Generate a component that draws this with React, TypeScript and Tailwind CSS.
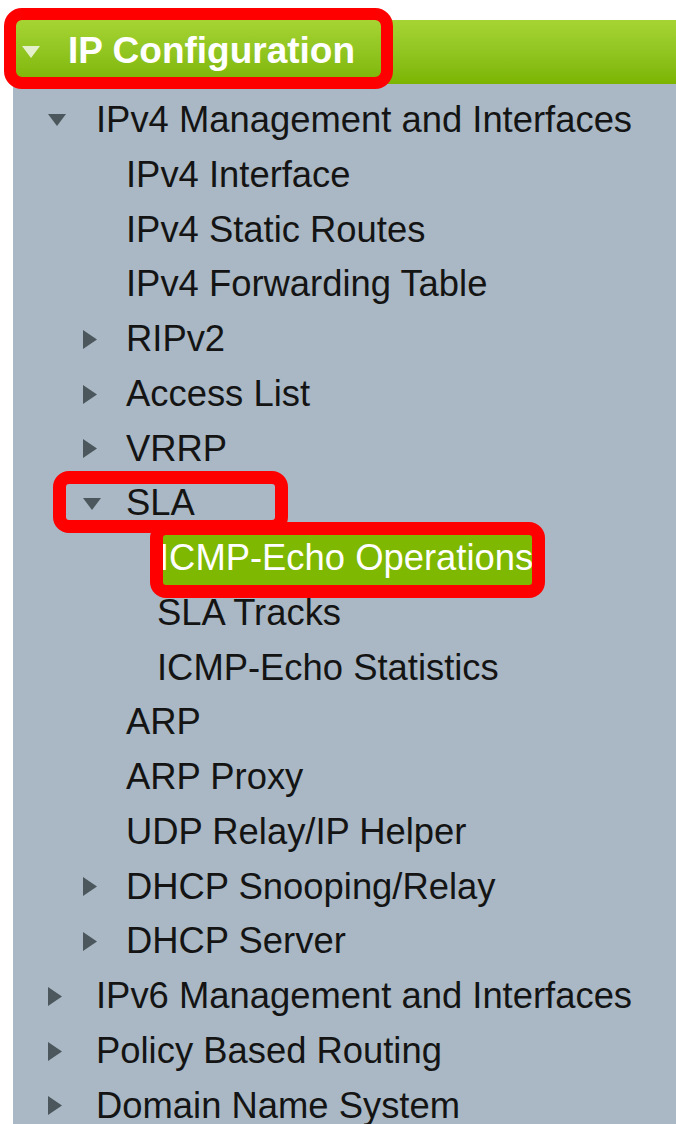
import React from 'react';

type Item = {
    label: string;
    level: 1 | 2 | 3;
    arrow?: 'down' | 'right';
    active?: boolean;
};

const items: Item[] = [
    { label: 'IPv4 Management and Interfaces', level: 1, arrow: 'down' },
    { label: 'IPv4 Interface', level: 2 },
    { label: 'IPv4 Static Routes', level: 2 },
    { label: 'IPv4 Forwarding Table', level: 2 },
    { label: 'RIPv2', level: 2, arrow: 'right' },
    { label: 'Access List', level: 2, arrow: 'right' },
    { label: 'VRRP', level: 2, arrow: 'right' },
    { label: 'SLA', level: 2, arrow: 'down' },
    { label: 'ICMP-Echo Operations', level: 3, active: true },
    { label: 'SLA Tracks', level: 3 },
    { label: 'ICMP-Echo Statistics', level: 3 },
    { label: 'ARP', level: 2 },
    { label: 'ARP Proxy', level: 2 },
    { label: 'UDP Relay/IP Helper', level: 2 },
    { label: 'DHCP Snooping/Relay', level: 2, arrow: 'right' },
    { label: 'DHCP Server', level: 2, arrow: 'right' },
    { label: 'IPv6 Management and Interfaces', level: 1, arrow: 'right' },
    { label: 'Policy Based Routing', level: 1, arrow: 'right' },
    { label: 'Domain Name System', level: 1, arrow: 'right' },
];

const DownArrow = ({ color }: { color: string }) => (
    <svg width="18" height="12" viewBox="0 0 18 12" className="block">
        <polygon points="0,0 18,0 9,12" fill={color} />
    </svg>
);

const RightArrow = () => (
    <svg width="14" height="19" viewBox="0 0 14 19" className="block">
        <polygon points="0,0 14,9.5 0,19" fill="#4b575d" />
    </svg>
);

const Row = ({ item }: { item: Item }) => {
    const arrow =
        item.arrow === 'down' ? <DownArrow color="#4b575d" /> : item.arrow === 'right' ? <RightArrow /> : null;

    return (
        <li className="flex h-[54.75px] items-center">
            {item.level === 1 && <div className="ml-[35px] flex w-[48px] items-center">{arrow}</div>}
            {item.level === 2 && <div className="ml-[70px] flex w-[43px] items-center">{arrow}</div>}
            {item.level === 3 && <div className="w-[144px]" />}
            {item.active ? (
                <span className="bg-[#7fb800] pl-[2px] pr-2 leading-[54px] text-white">{item.label}</span>
            ) : (
                <span className="text-[#141414]">{item.label}</span>
            )}
        </li>
    );
};

const App = () => {
    return (
        <div className="relative h-[1124px] overflow-hidden bg-white pl-[13px] pt-5 font-['Liberation_Sans',Arial,sans-serif] text-[36.4px]">
            <div className="h-full bg-[#a9b8c4]">
                <div className="flex h-16 items-center bg-gradient-to-b from-[#a6d533] to-[#7cb500]">
                    <div className="ml-[9px] flex w-[46px] items-center">
                        <DownArrow color="#e4f0cc" />
                    </div>
                    <h1 className="-mt-[2px] text-[37px] font-bold text-white">IP Configuration</h1>
                </div>
                <ul className="pt-[9px]">
                    {items.map((item) => (
                        <Row key={item.label} item={item} />
                    ))}
                </ul>
            </div>

            {/* callout outlines */}
            <div className="pointer-events-none absolute left-[4px] top-[8px] h-[81px] w-[389px] rounded-[18px] border-[12px] border-[#ff0000]" />
            <div className="pointer-events-none absolute left-[53px] top-[471px] h-[62px] w-[235px] rounded-[16px] border-[13px] border-[#ff0000]" />
            <div className="pointer-events-none absolute left-[150px] top-[522px] h-[76px] w-[395px] rounded-[16px] border-[13px] border-[#ff0000]" />
        </div>
    );
};

export default App;
